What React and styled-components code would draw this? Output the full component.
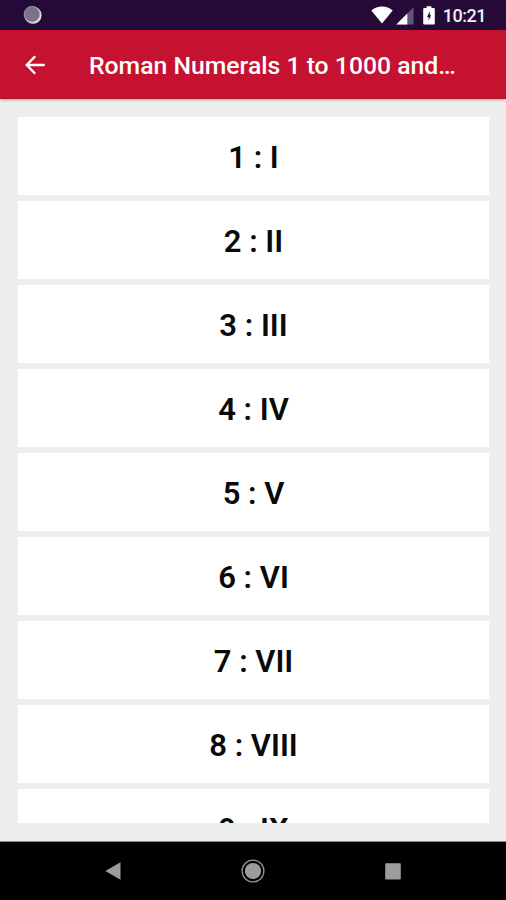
import React from "react";
import styled, { createGlobalStyle } from 'styled-components'

const numerals = ["I", "II", "III", "IV", "V", "VI", "VII", "VIII", "IX"]

export default function App() {

  return (<Screen>
    <GlobalStyle />
    <StatusBar>
      <svg width="20" height="20" viewBox="0 0 20 20">
        <circle cx="10" cy="10.2" r="8.6" fill="#e4e0e8" />
        <circle cx="9" cy="9.2" r="7.6" fill="#7d718b" />
        <circle cx="9" cy="9.2" r="7.9" fill="none" stroke="#a79fb1" strokeWidth="0.8" />
      </svg>
      <StatusRight>
        <svg width="22" height="18" viewBox="0 0 22 18">
          <path d="M0.3 4.6C6.3-0.9 15.7-0.9 21.7 4.6L11 17.6Z" fill="#fff" />
        </svg>
        <SignalIcon width="18" height="18" viewBox="0 0 18 18">
          <path d="M17.5 0.3V17.5H0.3Z" fill="#62547a" />
          <path d="M11.3 6.5V17.5H0.3Z" fill="#fff" />
        </SignalIcon>
        <BatteryIcon width="12" height="19" viewBox="0 0 12 19">
          <path d="M3.6 0.3H8.4V2H10.8Q11.8 2 11.8 3V17.5Q11.8 18.5 10.8 18.5H1.2Q0.2 18.5 0.2 17.5V3Q0.2 2 1.2 2H3.6Z" fill="#fff" />
          <path d="M6.8 5.3L4 10.9H5.6V14.6L8.2 9.2H6.8Z" fill="#250a38" />
        </BatteryIcon>
        <Clock>10:21</Clock>
      </StatusRight>
    </StatusBar>
    <AppBar>
      <svg width="20" height="20" viewBox="0 0 20 20">
        <path d="M19.8 10H2M10.2 1.2L1.7 10L10.2 18.8" fill="none" stroke="#fff" strokeWidth="2.3" />
      </svg>
      <Title>Roman Numerals 1 to 1000 and…</Title>
    </AppBar>
    <Content>
      <List>
        {numerals.map((numeral, i) => (
          <Row key={numeral}>{i + 1} : {numeral}</Row>
        ))}
      </List>
    </Content>
    <NavBar>
      <svg width="16" height="18" viewBox="0 0 16 18">
        <path d="M0.3 9L15.5 0.3V17.7Z" fill="#9c9c9c" />
      </svg>
      <svg width="24" height="24" viewBox="0 0 24 24">
        <circle cx="12" cy="12" r="10.9" fill="none" stroke="#929292" strokeWidth="1.3" />
        <circle cx="12" cy="12" r="8.1" fill="#9c9c9c" />
      </svg>
      <svg width="16" height="17" viewBox="0 0 16 17">
        <rect x="0.2" y="0.2" width="15.6" height="16.4" rx="0.8" fill="#9c9c9c" />
      </svg>
    </NavBar>
  </Screen>)
}

const GlobalStyle = createGlobalStyle`
  body {
    margin: 0;
    font-family: Roboto, sans-serif;
  }
`
const Screen = styled.div`
  width: 506px;
  height: 900px;
  display: flex;
  flex-direction: column;
  overflow: hidden;
  background-color: #eeeeee;
`
const StatusBar = styled.div`
  height: 30px;
  flex-shrink: 0;
  box-sizing: border-box;
  padding: 0 20px 0 23px;
  display: flex;
  align-items: center;
  justify-content: space-between;
  background-color: #250a38;
`
const StatusRight = styled.div`
  display: flex;
  align-items: center;
`
const SignalIcon = styled.svg`
  margin-left: 3px;
  margin-top: 2px;
`
const BatteryIcon = styled.svg`
  margin-left: 9px;
`
const Clock = styled.div`
  margin-left: 8px;
  margin-top: 2px;
  font-size: 18px;
  font-weight: 500;
  letter-spacing: -0.5px;
  line-height: 20px;
  color: #f2f0f4;
`
const AppBar = styled.div`
  height: 69px;
  flex-shrink: 0;
  box-sizing: border-box;
  padding: 1px 0 0 25px;
  display: flex;
  align-items: center;
  background-color: #c41230;
  border-bottom: 1px solid #b3131f;
  box-shadow: 0 1px 3px rgba(0, 0, 0, 0.3);
`
const Title = styled.div`
  margin-left: 44px;
  padding-top: 2px;
  font-size: 24.75px;
  font-weight: 500;
  white-space: nowrap;
  color: #fff;
`
const Content = styled.div`
  flex: 1;
  min-height: 0;
  box-sizing: border-box;
  padding: 18px 17px 18px 18px;
  border-bottom: 1px solid #8a8a8a;
`
const List = styled.div`
  height: 100%;
  box-sizing: border-box;
  padding-top: 0.4px;
  overflow: hidden;
  display: flex;
  flex-direction: column;
  gap: 5.9px;
`
const Row = styled.div`
  height: 78px;
  flex-shrink: 0;
  box-sizing: border-box;
  padding-top: 3px;
  display: flex;
  align-items: center;
  justify-content: center;
  font-size: 31px;
  font-weight: 600;
  white-space: pre;
  color: #0a0a0a;
  background-color: #fff;
`
const NavBar = styled.div`
  height: 58px;
  flex-shrink: 0;
  box-sizing: border-box;
  padding: 0 105px;
  display: flex;
  align-items: center;
  justify-content: space-between;
  background-color: #000;
`
